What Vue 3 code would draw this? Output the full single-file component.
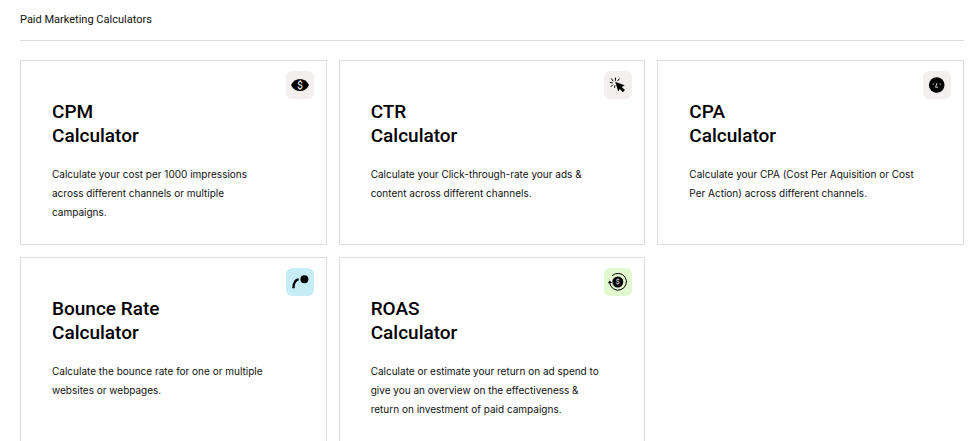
<script setup>
const calculators = [
  { id: 'cpm', name: 'CPM', tone: 'neutral', text: 'Calculate your cost per 1000 impressions\nacross different channels or multiple\ncampaigns.' },
  { id: 'ctr', name: 'CTR', tone: 'neutral', text: 'Calculate your Click-through-rate your ads &\ncontent across different channels.' },
  { id: 'cpa', name: 'CPA', tone: 'neutral', text: 'Calculate your CPA (Cost Per Aquisition or Cost\nPer Action) across different channels.' },
  { id: 'bounce', name: 'Bounce Rate', tone: 'blue', text: 'Calculate the bounce rate for one or multiple\nwebsites or webpages.' },
  { id: 'roas', name: 'ROAS', tone: 'green', text: 'Calculate or estimate your return on ad spend to\ngive you an overview on the effectiveness &\nreturn on investment of paid campaigns.' },
]
</script>

<template>
  <main class="page">
    <h1 class="heading">Paid Marketing Calculators</h1>
    <section class="grid">
      <a v-for="item in calculators" :key="item.id" class="card" :href="'#' + item.id">
        <span class="tile" :class="item.tone">
          <svg v-if="item.id === 'cpm'" viewBox="0 0 28 28" aria-hidden="true">
            <path d="M5 14C7 10 10 8 14 8S21 10 23 14C21 18 18 20 14 20S7 18 5 14Z" />
            <text x="14" y="17.5" class="sign">$</text>
          </svg>
          <svg v-else-if="item.id === 'ctr'" viewBox="0 0 28 28" aria-hidden="true">
            <path d="M11.2 10.8L20.6 14.2L17.8 15.9L21 19.1L18.8 21.2L15.7 18L14.2 20.6Z" />
            <path class="ray" d="M11.4 9.8V6.6M9.2 10.2L7.2 7.4M8.7 11.9L5.8 11.4M9 13.6L6.8 15.8M11 14.3L10.5 16.8M13.4 10.1L15.6 7.6" />
          </svg>
          <svg v-else-if="item.id === 'cpa'" viewBox="0 0 28 28" aria-hidden="true">
            <circle cx="13.7" cy="14" r="7.8" />
            <path class="face" d="M14.1 12L12.5 16.2H15.2" />
            <circle class="eye" cx="10.3" cy="13.1" r="0.6" />
            <circle class="eye" cx="17.2" cy="13.1" r="0.6" />
          </svg>
          <svg v-else-if="item.id === 'bounce'" viewBox="0 0 28 28" aria-hidden="true">
            <circle cx="18.4" cy="11.2" r="4" />
            <path class="arc" d="M7.4 20.2C7.5 15.4 9 12.2 12.6 11.2" />
          </svg>
          <svg v-else viewBox="0 0 28 28" aria-hidden="true">
            <circle cx="13.8" cy="14" r="5.5" />
            <text x="13.8" y="16.4" class="sign small">$</text>
            <path class="orbit" d="M8 7.9A8.4 8.4 0 1 1 5.7 15" />
            <path d="M3.8 15.2L5.7 12.5L8 15Z" />
          </svg>
        </span>
        <h2 class="title">{{ item.name }}<br />Calculator</h2>
        <p class="text">{{ item.text }}</p>
      </a>
    </section>
  </main>
</template>

<style>
body {
  margin: 0;
  background: #fff;
}
</style>

<style scoped>
.page {
  padding: 8px 11px 12px 20px;
  font-family: Roboto, "Liberation Sans", Arial, sans-serif;
  color: #111;
}
.heading {
  margin: 0 0 19px;
  padding-bottom: 9px;
  border-bottom: 1px solid #dedede;
  font-size: 11px;
  line-height: 23px;
  font-weight: 400;
}
.grid {
  display: grid;
  grid-template-columns: repeat(3, 1fr);
  gap: 12px;
}
.card {
  position: relative;
  box-sizing: border-box;
  min-height: 185px;
  padding: 39px 31px 22px;
  border: 1px solid #dedede;
  color: inherit;
  text-decoration: none;
}
.title {
  margin: 0 0 17px;
  color: #000;
  font-size: 19px;
  line-height: 24px;
  font-weight: 500;
}
.text {
  margin: 0;
  font-family: Inter, "Liberation Sans", sans-serif;
  font-size: 10px;
  line-height: 19px;
  white-space: pre-line;
}
.tile {
  position: absolute;
  top: 10px;
  right: 12px;
  width: 28px;
  height: 28px;
  border-radius: 6px;
}
.tile svg {
  display: block;
  width: 100%;
  height: 100%;
}
.neutral { background: #f3efee; }
.blue { background: #c6edf5; }
.green { background: #e2f9cf; }
.sign {
  fill: #fff;
  font-size: 10px;
  text-anchor: middle;
}
.small { font-size: 7px; }
.eye { fill: #fff; }
.ray,
.face,
.arc,
.orbit {
  fill: none;
  stroke: #000;
  stroke-width: 1;
}
.face {
  stroke: #fff;
  stroke-width: 0.8;
}
.arc { stroke-width: 2.4; }
</style>
